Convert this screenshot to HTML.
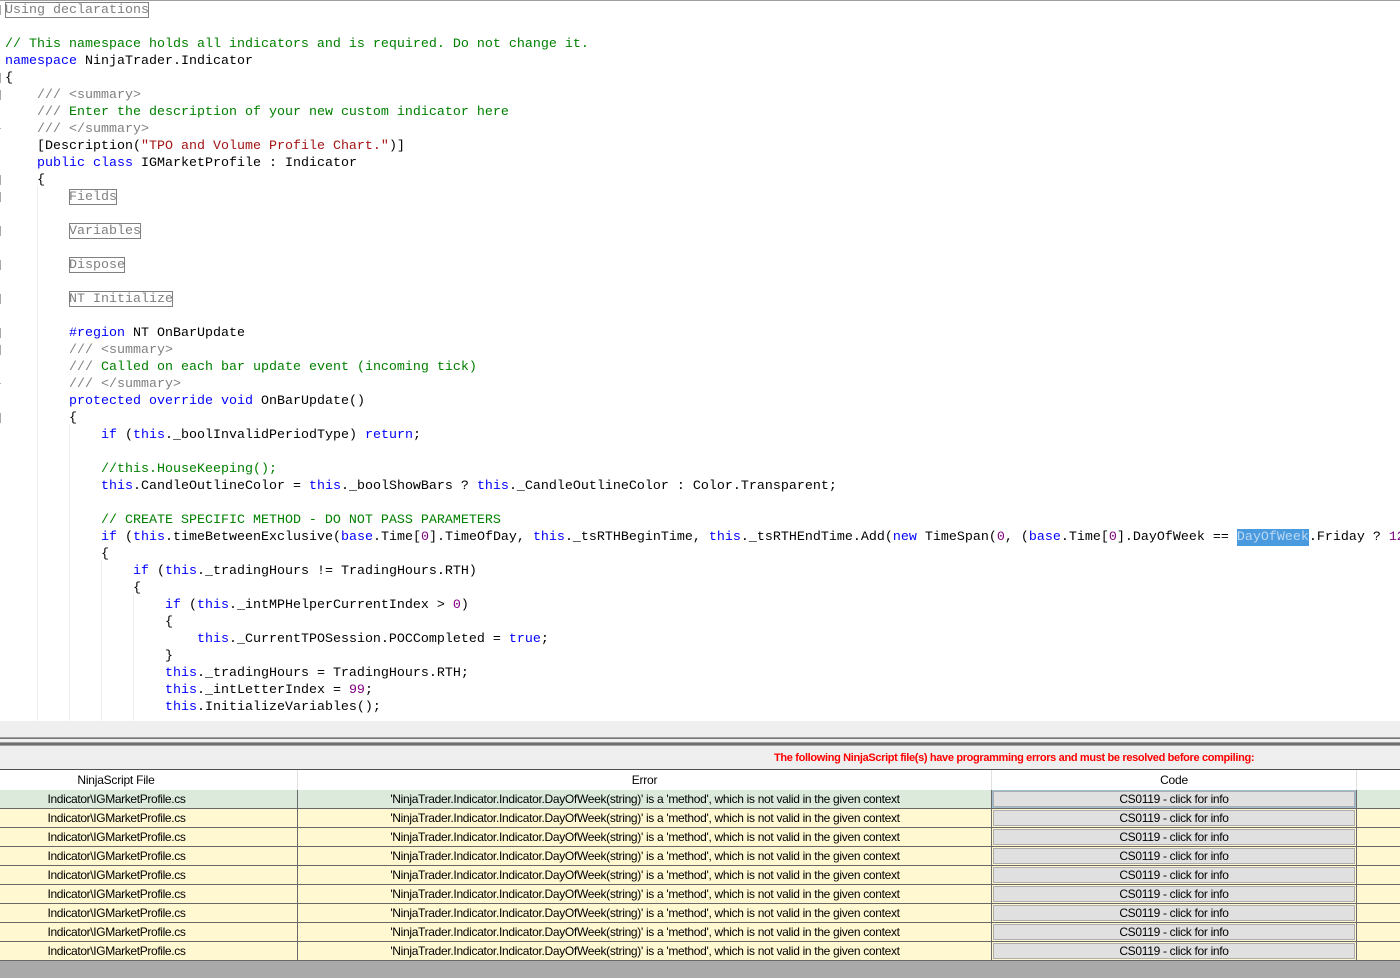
<!DOCTYPE html>
<html><head><meta charset="utf-8"><style>
html,body{margin:0;padding:0;width:1400px;height:978px;overflow:hidden;background:#efefef}
#code{position:absolute;left:0;top:0;width:1400px;height:721px;background:#fff;overflow:hidden;border-top:1px solid #a0a0a0;box-sizing:border-box}
pre{position:absolute;left:5px;top:1px;margin:0;font:13.33px/17px "Liberation Mono",monospace;color:#000;white-space:pre}
.k{color:#00f}.c{color:#008000}.d{color:#808080}.s{color:#a31515}.n{color:#800080}
.r{display:inline-block;height:16px;line-height:17px;vertical-align:top;color:#808080;outline:1px solid #808080;outline-offset:-1px}
.h{display:inline-block;height:17px;line-height:17px;vertical-align:top;background:#4a9ae0;color:#bcd9f2}
.g,.t{position:absolute}.g{width:1px;background:#eee}.t{left:0;width:1px;height:10px;background:#aaa}
.l{position:absolute;left:0;width:1400px}
.row{position:absolute;left:0;width:1400px;height:18px;border-bottom:1px solid #696969;background:#fff8d1;font:12px/18px "Liberation Sans",sans-serif;color:#000;letter-spacing:-.36px}
.row div,.hd div{position:absolute;top:0;text-align:center;white-space:nowrap}
.a{left:0;width:233px}.b{left:298px;width:694px;letter-spacing:-.315px}
.row div.f{left:993px;top:1px;width:362px;height:16px;box-sizing:border-box;border:1px solid #adadad;background:#e0e0e0;line-height:15px;letter-spacing:-.31px}
.v1,.v2,.v3{position:absolute;top:0;width:1px;height:19px;background:#696969}.v1{left:297px}.v2{left:991px}.v3{left:1356px}
.hd{position:absolute;left:0;top:770px;width:1400px;height:20px;background:#fff;font:12px/20px "Liberation Sans",sans-serif;letter-spacing:-.22px}
.hv{position:absolute;top:0;width:1px;height:20px;background:#e0e0e0}
</style></head><body>
<div id="code">
<div class="g" style="left:37px;top:185px;height:536px"></div>
<div class="g" style="left:69px;top:423px;height:298px"></div>
<div class="g" style="left:101px;top:559px;height:162px"></div>
<div class="g" style="left:133px;top:593px;height:128px"></div>
<div class="t" style="top:4px"></div><div class="t" style="top:72px"></div><div class="t" style="top:89px"></div><div class="t" style="top:127px;height:1px"></div><div class="t" style="top:174px"></div><div class="t" style="top:191px"></div><div class="t" style="top:225px"></div><div class="t" style="top:259px"></div><div class="t" style="top:293px"></div><div class="t" style="top:327px"></div><div class="t" style="top:344px"></div><div class="t" style="top:382px;height:1px"></div><div class="t" style="top:412px"></div>
<pre><span class="r" style="width:144px">Using declarations</span>

<span class="c">// This namespace holds all indicators and is required. Do not change it.</span>
<span class="k">namespace</span> NinjaTrader.Indicator
{
    <span class="d">///</span> <span class="d">&lt;summary&gt;</span>
    <span class="d">///</span> <span class="c">Enter the description of your new custom indicator here</span>
    <span class="d">///</span> <span class="d">&lt;/summary&gt;</span>
    [Description(<span class="s">"TPO and Volume Profile Chart."</span>)]
    <span class="k">public</span> <span class="k">class</span> IGMarketProfile : Indicator
    {
        <span class="r" style="width:48px">Fields</span>

        <span class="r" style="width:72px">Variables</span>

        <span class="r" style="width:56px">Dispose</span>

        <span class="r" style="width:104px">NT Initialize</span>

        <span class="k">#region</span> NT OnBarUpdate
        <span class="d">///</span> <span class="d">&lt;summary&gt;</span>
        <span class="d">///</span> <span class="c">Called on each bar update event (incoming tick)</span>
        <span class="d">///</span> <span class="d">&lt;/summary&gt;</span>
        <span class="k">protected</span> <span class="k">override</span> <span class="k">void</span> OnBarUpdate()
        {
            <span class="k">if</span> (<span class="k">this</span>._boolInvalidPeriodType) <span class="k">return</span>;

            <span class="c">//this.HouseKeeping();</span>
            <span class="k">this</span>.CandleOutlineColor = <span class="k">this</span>._boolShowBars ? <span class="k">this</span>._CandleOutlineColor : Color.Transparent;

            <span class="c">// CREATE SPECIFIC METHOD - DO NOT PASS PARAMETERS</span>
            <span class="k">if</span> (<span class="k">this</span>.timeBetweenExclusive(<span class="k">base</span>.Time[<span class="n">0</span>].TimeOfDay, <span class="k">this</span>._tsRTHBeginTime, <span class="k">this</span>._tsRTHEndTime.Add(<span class="k">new</span> TimeSpan(<span class="n">0</span>, (<span class="k">base</span>.Time[<span class="n">0</span>].DayOfWeek == <span class="h">DayOfWeek</span>.Friday ? <span class="n">12</span> : <span class="n">0</span>), <span class="n">0</span>, <span class="n">0</span>))))
            {
                <span class="k">if</span> (<span class="k">this</span>._tradingHours != TradingHours.RTH)
                {
                    <span class="k">if</span> (<span class="k">this</span>._intMPHelperCurrentIndex &gt; <span class="n">0</span>)
                    {
                        <span class="k">this</span>._CurrentTPOSession.POCCompleted = <span class="k">true</span>;
                    }
                    <span class="k">this</span>._tradingHours = TradingHours.RTH;
                    <span class="k">this</span>._intLetterIndex = <span class="n">99</span>;
                    <span class="k">this</span>.InitializeVariables();</pre>
</div>

<div class="l" style="top:737px;height:1px;background:#a0a0a0"></div>
<div class="l" style="top:738px;height:1px;background:#777"></div>
<div class="l" style="top:742px;height:1px;background:#a0a0a0"></div>
<div class="l" style="top:743px;height:2px;background:#6e6e6e"></div>
<div class="l" style="top:745px;height:1px;background:#a0a0a0"></div>

<div style="position:absolute;left:774px;top:751px;width:480px;white-space:nowrap;font:bold 11px/15px 'Liberation Sans',sans-serif;color:#f00;letter-spacing:-.34px">The following NinjaScript file(s) have programming errors and must be resolved before compiling:</div>

<div class="l" style="top:769px;height:1px;background:#505050"></div>
<div class="hd">
<div style="left:0;width:232px">NinjaScript File</div><div style="left:298px;width:693px">Error</div><div style="left:992px;width:364px">Code</div>
<span class="hv" style="left:297px"></span><span class="hv" style="left:991px"></span><span class="hv" style="left:1356px"></span>
</div>

<div class="row" style="top:790px;background:#dceadb"><div class="a">Indicator\IGMarketProfile.cs</div><div class="b">'NinjaTrader.Indicator.Indicator.DayOfWeek(string)' is a 'method', which is not valid in the given context</div><div class="f" style="outline:1px solid #9ebfd3">CS0119 - click for info</div><span class="v1"></span><span class="v2"></span><span class="v3"></span></div>
<div class="row" style="top:809px"><div class="a">Indicator\IGMarketProfile.cs</div><div class="b">'NinjaTrader.Indicator.Indicator.DayOfWeek(string)' is a 'method', which is not valid in the given context</div><div class="f">CS0119 - click for info</div><span class="v1"></span><span class="v2"></span><span class="v3"></span></div>
<div class="row" style="top:828px"><div class="a">Indicator\IGMarketProfile.cs</div><div class="b">'NinjaTrader.Indicator.Indicator.DayOfWeek(string)' is a 'method', which is not valid in the given context</div><div class="f">CS0119 - click for info</div><span class="v1"></span><span class="v2"></span><span class="v3"></span></div>
<div class="row" style="top:847px"><div class="a">Indicator\IGMarketProfile.cs</div><div class="b">'NinjaTrader.Indicator.Indicator.DayOfWeek(string)' is a 'method', which is not valid in the given context</div><div class="f">CS0119 - click for info</div><span class="v1"></span><span class="v2"></span><span class="v3"></span></div>
<div class="row" style="top:866px"><div class="a">Indicator\IGMarketProfile.cs</div><div class="b">'NinjaTrader.Indicator.Indicator.DayOfWeek(string)' is a 'method', which is not valid in the given context</div><div class="f">CS0119 - click for info</div><span class="v1"></span><span class="v2"></span><span class="v3"></span></div>
<div class="row" style="top:885px"><div class="a">Indicator\IGMarketProfile.cs</div><div class="b">'NinjaTrader.Indicator.Indicator.DayOfWeek(string)' is a 'method', which is not valid in the given context</div><div class="f">CS0119 - click for info</div><span class="v1"></span><span class="v2"></span><span class="v3"></span></div>
<div class="row" style="top:904px"><div class="a">Indicator\IGMarketProfile.cs</div><div class="b">'NinjaTrader.Indicator.Indicator.DayOfWeek(string)' is a 'method', which is not valid in the given context</div><div class="f">CS0119 - click for info</div><span class="v1"></span><span class="v2"></span><span class="v3"></span></div>
<div class="row" style="top:923px"><div class="a">Indicator\IGMarketProfile.cs</div><div class="b">'NinjaTrader.Indicator.Indicator.DayOfWeek(string)' is a 'method', which is not valid in the given context</div><div class="f">CS0119 - click for info</div><span class="v1"></span><span class="v2"></span><span class="v3"></span></div>
<div class="row" style="top:942px"><div class="a">Indicator\IGMarketProfile.cs</div><div class="b">'NinjaTrader.Indicator.Indicator.DayOfWeek(string)' is a 'method', which is not valid in the given context</div><div class="f">CS0119 - click for info</div><span class="v1"></span><span class="v2"></span><span class="v3"></span></div>

<div class="l" style="top:961px;height:17px;background:#a9a9a9"></div>
</body></html>
